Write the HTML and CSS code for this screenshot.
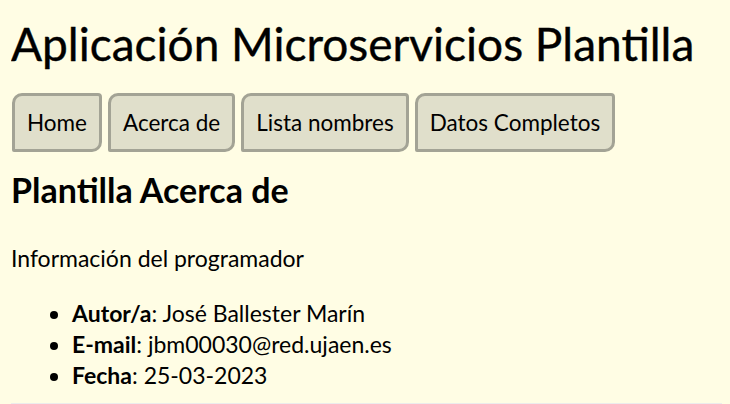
FILE: index.html
```html
<!DOCTYPE html>
<html lang="es">
<head>
<meta charset="utf-8">
<title>Aplicación Microservicios Plantilla</title>
<link rel="stylesheet" href="styles.css">
</head>
<body>
<h1 class="title">Aplicación Microservicios Plantilla</h1>
<nav class="menu">
  <a class="btn" href="#">Home</a>
  <a class="btn" href="#">Acerca de</a>
  <a class="btn" href="#">Lista nombres</a>
  <a class="btn" href="#">Datos Completos</a>
</nav>
<h2 class="subtitle">Plantilla Acerca de</h2>
<p class="intro">Información del programador</p>
<ul class="info">
  <li><b>Autor/a</b>: José Ballester Marín</li>
  <li><b>E-mail</b>: jbm00030@red.ujaen.es</li>
  <li><b>Fecha</b>: 25-03-2023</li>
</ul>
<footer class="foot"></footer>
</body>
</html>
```
FILE: styles.css
```css
html, body {
  background: #fffde4;
}
body {
  margin: 8px 8px 8px 11px;
  font-family: Lato, "Noto Sans", sans-serif;
  font-size: 23px;
  color: #000;
}
.title {
  margin: 4px 0 0;
  font-size: 46px;
  line-height: 64px;
  font-weight: 400;
  -webkit-text-stroke: 0.4px #000;
}
.menu {
  display: flex;
  gap: 6px;
  margin-top: 17px;
  margin-left: 1px;
}
.btn {
  display: flex;
  align-items: center;
  height: 53px;
  padding: 0 12px;
  background: #e0dfcb;
  border: 3px solid #a3a395;
  border-radius: 10px 4px 10px 2px;
  color: #000;
  text-decoration: none;
  font-size: 22.5px;
}
.subtitle {
  margin: 17px 0 0;
  font-size: 34px;
  line-height: 42px;
  font-weight: 700;
}
.intro {
  margin: 32px 0 0;
  line-height: 31px;
}
.info {
  margin: 24px 0 0;
  padding-left: 61px;
  line-height: 31px;
}
.foot {
  margin: 12px -8px 0 -11px;
  border-top: 2px solid #ececec;
}
```
